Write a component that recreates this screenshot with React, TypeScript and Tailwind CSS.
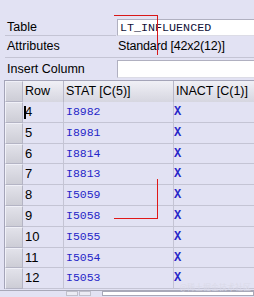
import React from "react";

const rows = [
  { n: "4", stat: "I8982" },
  { n: "5", stat: "I8981" },
  { n: "6", stat: "I8814" },
  { n: "7", stat: "I8813" },
  { n: "8", stat: "I5059" },
  { n: "9", stat: "I5058" },
  { n: "10", stat: "I5055" },
  { n: "11", stat: "I5054" },
  { n: "12", stat: "I5053" },
];

const sans = "font-['Tahoma','Liberation_Sans',sans-serif]";
const mono = "font-['Liberation_Mono',monospace]";

const Selector = () => (
  <div className="w-[18px] h-full shrink-0 border border-[#b4b4c4] border-t-[#f0f0f8] border-l-[#f0f0f8] bg-gradient-to-b from-[#e2e2ea] to-[#cdcdd6]" />
);

export default function App() {
  return (
    <div className={`relative w-[254px] h-[297px] overflow-hidden bg-[#e2e2f3] text-[12.5px] text-black ${sans}`}>
      <div className="pt-[20px]">
        {/* Table */}
        <div className="flex h-[16px]">
          <div className="ml-[5px] w-[111px] border-b border-[#c4c4d4] pl-[2px] leading-[15px]">Table</div>
          <div className="ml-[1px] flex-1 -mt-[1px] h-[17px] bg-white border border-[#b0b0c0] border-r-0 border-b-[#dcdce6] pl-[2px] leading-[15px]">
            <span className={`${mono} text-[11.7px] text-[#101038]`}>LT_INFLUENCED</span>
          </div>
        </div>
        {/* Attributes */}
        <div className="flex h-[22px] ml-[5px] border-b border-[#c4c4d4] items-center">
          <div className="w-[113px] pl-[2px]">Attributes</div>
          <div className="tracking-[-0.2px]">Standard [42x2(12)]</div>
        </div>
        {/* Insert Column */}
        <div className="flex h-[22px] items-center">
          <div className="ml-[5px] w-[111px] pl-[2px]">Insert Column</div>
          <div className="ml-[1px] flex-1 h-[18px] bg-white border border-[#b0b0c0] border-r-0 border-b-[#dcdce6]" />
        </div>
      </div>

      {/* Grid */}
      <div className="ml-[4px] border-t border-l border-[#a4a4b8]">
        <div className="flex h-[21px]">
          <Selector />
          <div className="w-[41px] border-r border-[#b8b8c8] bg-gradient-to-b from-[#f0f0f6] to-[#d6d6e0] pl-[2px] leading-[21px]">Row</div>
          <div className="w-[110px] border-r border-[#b8b8c8] bg-gradient-to-b from-[#f0f0f6] to-[#d6d6e0] pl-[2px] leading-[21px] whitespace-nowrap">STAT [C(5)]</div>
          <div className="flex-1 bg-gradient-to-b from-[#f0f0f6] to-[#d6d6e0] pl-[2px] leading-[21px] whitespace-nowrap">INACT [C(1)]</div>
        </div>
        {rows.map((r, i) => (
          <div key={r.n} className="flex h-[20.8px]">
            <Selector />
            <div className="relative w-[41px] border-r border-b border-[#c4c4d4] pl-[2px] leading-[20px] text-[13px]">
              {i === 0 && <span className="absolute left-[1px] top-[4px] w-[2px] h-[13px] bg-black" />}
              {r.n}
            </div>
            <div className={`w-[110px] border-r border-b border-[#c4c4d4] pl-[2px] leading-[20px] ${mono} text-[11.5px] text-[#2626c8]`}>{r.stat}</div>
            <div className={`flex-1 border-b border-[#c4c4d4] leading-[20px] ${mono} font-bold text-[12px] text-[#2626c8]`}>X</div>
          </div>
        ))}
      </div>

      {/* bottom bar */}
      <div className="mt-[1px] border-t border-[#a8a8b8] flex h-[6px]">
        <div className="ml-[66px] w-[12px] h-full border border-[#c0c0cc] bg-[#ececf4]" />
        <div className="ml-[1px] w-[12px] h-full border border-[#c0c0cc] bg-[#ececf4]" />
        <div className="ml-[11px] flex-1 h-full border border-[#a8a8b8] bg-white" />
      </div>

      {/* red annotation lines */}
      <div className="absolute left-[114px] top-[15px] w-[44px] h-[1px] bg-[#d81818]" />
      <div className="absolute left-[157px] top-[15px] w-[1px] h-[40px] bg-[#d81818]" />
      <div className="absolute left-[157px] top-[179px] w-[1px] h-[40px] bg-[#e01818]" />
      <div className="absolute left-[114px] top-[218px] w-[44px] h-[1px] bg-[#e01818]" />

      {/* watermark */}
      <div className="absolute right-[3px] top-[281px] text-[8px] text-[#dadae8] font-['Noto_Sans_CJK_SC',sans-serif]">@稀土掘金技术社区</div>
    </div>
  );
}
